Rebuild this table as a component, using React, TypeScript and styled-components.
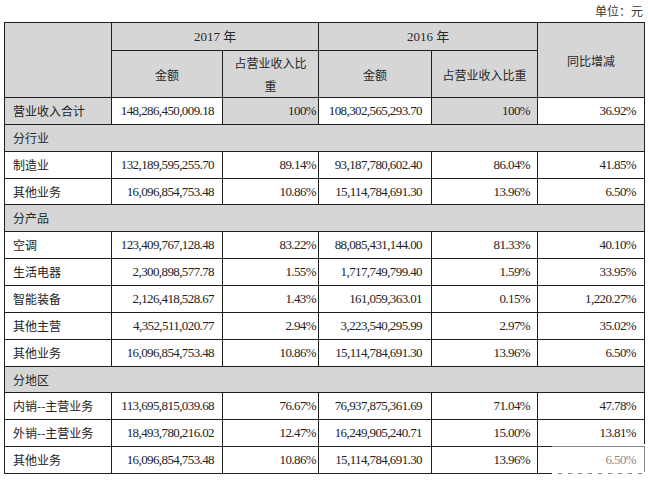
import React from 'react';
import styled, { createGlobalStyle } from 'styled-components';

const GlobalStyle = createGlobalStyle`
  html, body { margin: 0; padding: 0; background: #ffffff; }
  * { box-sizing: border-box; }
`;

const FONT = `"Liberation Serif", "Noto Sans CJK SC", serif`;
const CJK = `"Noto Sans CJK SC", "Liberation Sans", sans-serif`;
const GRAY = '#d6d6d6';
const LINE = '#1f1f1f';

const Page = styled.div`
  position: relative;
  width: 648px;
  height: 481px;
  overflow: hidden;
  background: #fff;
  color: #2a2a2a;
`;

const UnitLine = styled.div`
  height: 22px;
  line-height: 22px;
  padding-right: 5px;
  text-align: right;
  font-family: ${CJK};
  font-size: 12px;
  color: #3a3a3a;
`;

const Table = styled.table`
  margin-left: 4px;
  width: 640px;
  border-collapse: collapse;
  table-layout: fixed;
`;

const HeadRow = styled.tr<{ $h: number }>`
  height: ${(p) => p.$h}px;
`;

const BodyRow = styled.tr`
  height: 26.86px;
`;

const HeadCell = styled.th<{ $num?: boolean }>`
  border: 1px solid ${LINE};
  background: ${GRAY};
  padding: 0 8px;
  font-weight: normal;
  text-align: center;
  vertical-align: middle;
  font-family: ${(p) => (p.$num ? FONT : CJK)};
  font-size: ${(p) => (p.$num ? 13 : 12)}px;
  line-height: 23px;
  color: #2a2a2a;
`;

const Cell = styled.td<{ $gray?: boolean; $label?: boolean; $pr?: number }>`
  border: 1px solid ${LINE};
  background: ${(p) => (p.$gray ? GRAY : '#fff')};
  padding: 0 ${(p) => (p.$label ? 0 : p.$pr ?? 8)}px 0 ${(p) => (p.$label ? 8 : 0)}px;
  text-align: ${(p) => (p.$label ? 'left' : 'right')};
  vertical-align: middle;
  white-space: nowrap;
  font-family: ${(p) => (p.$label ? CJK : FONT)};
  font-size: ${(p) => (p.$label ? 12 : 13)}px;
  letter-spacing: ${(p) => (p.$label ? 0 : -0.6)}px;
  line-height: 16px;
  color: #222;
`;

const SectionCell = styled.td`
  border: 1px solid ${LINE};
  background: ${GRAY};
  padding: 0 0 0 8px;
  text-align: left;
  vertical-align: middle;
  font-family: ${CJK};
  font-size: 12px;
  line-height: 16px;
  color: #2a2a2a;
`;

const Watermark = styled.div`
  position: absolute;
  left: 552px;
  top: 444px;
  width: 96px;
  height: 30px;
  background: rgba(255, 255, 255, 0.45);
  border-top: 2px dashed rgba(255, 255, 255, 0.95);
  border-bottom: 2px dashed rgba(255, 255, 255, 0.95);
`;

type Row =
  | { kind: 'section'; title: string }
  | { kind: 'data'; cells: string[]; total?: boolean };

const rows: Row[] = [
  { kind: 'data', total: true, cells: ['营业收入合计', '148,286,450,009.18', '100%', '108,302,565,293.70', '100%', '36.92%'] },
  { kind: 'section', title: '分行业' },
  { kind: 'data', cells: ['制造业', '132,189,595,255.70', '89.14%', '93,187,780,602.40', '86.04%', '41.85%'] },
  { kind: 'data', cells: ['其他业务', '16,096,854,753.48', '10.86%', '15,114,784,691.30', '13.96%', '6.50%'] },
  { kind: 'section', title: '分产品' },
  { kind: 'data', cells: ['空调', '123,409,767,128.48', '83.22%', '88,085,431,144.00', '81.33%', '40.10%'] },
  { kind: 'data', cells: ['生活电器', '2,300,898,577.78', '1.55%', '1,717,749,799.40', '1.59%', '33.95%'] },
  { kind: 'data', cells: ['智能装备', '2,126,418,528.67', '1.43%', '161,059,363.01', '0.15%', '1,220.27%'] },
  { kind: 'data', cells: ['其他主营', '4,352,511,020.77', '2.94%', '3,223,540,295.99', '2.97%', '35.02%'] },
  { kind: 'data', cells: ['其他业务', '16,096,854,753.48', '10.86%', '15,114,784,691.30', '13.96%', '6.50%'] },
  { kind: 'section', title: '分地区' },
  { kind: 'data', cells: ['内销--主营业务', '113,695,815,039.68', '76.67%', '76,937,875,361.69', '71.04%', '47.78%'] },
  { kind: 'data', cells: ['外销--主营业务', '18,493,780,216.02', '12.47%', '16,249,905,240.71', '15.00%', '13.81%'] },
  { kind: 'data', cells: ['其他业务', '16,096,854,753.48', '10.86%', '15,114,784,691.30', '13.96%', '6.50%'] },
];

const colWidths = [107, 111, 96, 113, 106, 107];
const rightPad = [0, 8, 2, 9, 7, 8];

export default function App() {
  return (
    <>
      <GlobalStyle />
      <Page>
        <UnitLine>单位：元</UnitLine>
        <Table>
          <colgroup>
            {colWidths.map((w, i) => (
              <col key={i} style={{ width: w }} />
            ))}
          </colgroup>
          <thead>
            <HeadRow $h={28}>
              <HeadCell rowSpan={2} />
              <HeadCell colSpan={2} $num>2017 年</HeadCell>
              <HeadCell colSpan={2} $num>2016 年</HeadCell>
              <HeadCell rowSpan={2}>同比增减</HeadCell>
            </HeadRow>
            <HeadRow $h={47}>
              <HeadCell>金额</HeadCell>
              <HeadCell>占营业收入比重</HeadCell>
              <HeadCell>金额</HeadCell>
              <HeadCell>占营业收入比重</HeadCell>
            </HeadRow>
          </thead>
          <tbody>
            {rows.map((r, i) =>
              r.kind === 'section' ? (
                <BodyRow key={i}>
                  <SectionCell colSpan={6}>{r.title}</SectionCell>
                </BodyRow>
              ) : (
                <BodyRow key={i}>
                  {r.cells.map((c, j) => (
                    <Cell
                      key={j}
                      $label={j === 0}
                      $pr={rightPad[j]}
                      $gray={!!r.total && (j === 0 || j === 2 || j === 4)}
                    >
                      {c}
                    </Cell>
                  ))}
                </BodyRow>
              )
            )}
          </tbody>
        </Table>
        <Watermark />
      </Page>
    </>
  );
}
